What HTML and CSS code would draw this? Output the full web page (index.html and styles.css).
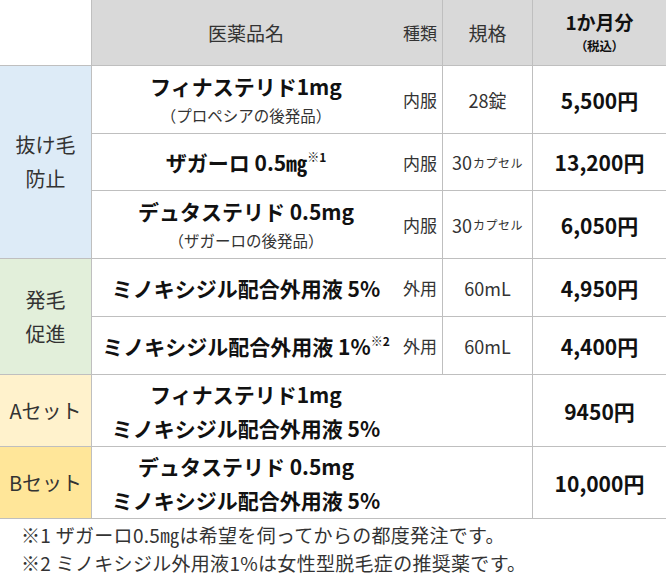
FILE: index.html
```html
<!DOCTYPE html>
<html lang="ja">
<head>
<meta charset="utf-8">
<title>料金表</title>
<link rel="stylesheet" href="styles.css">
</head>
<body>
<div class="sheet">
  <div class="cell blank"></div>
  <div class="cell head name-h noright">医薬品名</div>
  <div class="cell head type">種類</div>
  <div class="cell head spec-h">規格</div>
  <div class="cell head price-h noright">
    <span class="price-title">1か月分</span>
    <span class="price-sub">（税込）</span>
  </div>

  <div class="cell cat blue span3">抜け毛<br>防止</div>
  <div class="cell name noright">
    <span class="drug">フィナステリド1mg</span>
    <span class="note">（プロペシアの後発品）</span>
  </div>
  <div class="cell type">内服</div>
  <div class="cell spec">28錠</div>
  <div class="cell price noright">5,500円</div>

  <div class="cell name noright">
    <span class="drug">ザガーロ 0.5㎎<sup class="mark">※1</sup></span>
  </div>
  <div class="cell type">内服</div>
  <div class="cell spec">30<span class="unit">カプセル</span></div>
  <div class="cell price noright">13,200円</div>

  <div class="cell name noright">
    <span class="drug">デュタステリド 0.5mg</span>
    <span class="note">（ザガーロの後発品）</span>
  </div>
  <div class="cell type">内服</div>
  <div class="cell spec">30<span class="unit">カプセル</span></div>
  <div class="cell price noright">6,050円</div>

  <div class="cell cat green span2">発毛<br>促進</div>
  <div class="cell name noright">
    <span class="drug">ミノキシジル配合外用液 5%</span>
  </div>
  <div class="cell type">外用</div>
  <div class="cell spec">60mL</div>
  <div class="cell price noright">4,950円</div>

  <div class="cell name noright">
    <span class="drug">ミノキシジル配合外用液 1%<sup class="mark">※2</sup></span>
  </div>
  <div class="cell type">外用</div>
  <div class="cell spec">60mL</div>
  <div class="cell price noright">4,400円</div>

  <div class="cell cat set-a">Aセット</div>
  <div class="cell name set-name">
    <span class="drug set-line">フィナステリド1mg</span>
    <span class="drug set-line">ミノキシジル配合外用液 5%</span>
  </div>
  <div class="cell price noright">9450円</div>

  <div class="cell cat set-b">Bセット</div>
  <div class="cell name set-name">
    <span class="drug set-line">デュタステリド 0.5mg</span>
    <span class="drug set-line">ミノキシジル配合外用液 5%</span>
  </div>
  <div class="cell price noright">10,000円</div>
</div>

<div class="footnotes">
  <p class="fn">※1 ザガーロ0.5㎎は希望を伺ってからの都度発注です。</p>
  <p class="fn">※2 ミノキシジル外用液1%は女性型脱毛症の推奨薬です。</p>
</div>
</body>
</html>
```

FILE: styles.css
```css
html, body {
  margin: 0;
  padding: 0;
  background: #ffffff;
}

body {
  font-family: "Noto Sans CJK JP", "Noto Sans", sans-serif;
  color: #333333;
}

.sheet {
  display: grid;
  grid-template-columns: 92px 308px 43px 90px 133px;
  grid-template-rows: 66px 68px 57px 68px 58px 58px 72px 72px;
  width: 666px;
}

.cell {
  box-sizing: border-box;
  border-right: 1px solid #bfbfbf;
  border-bottom: 1px solid #bfbfbf;
  display: flex;
  align-items: center;
  justify-content: center;
  min-width: 0;
}

.noright {
  border-right: none;
}

.blank {
  background: #ffffff;
}

.head {
  background: #d9d9d9;
  font-size: 19px;
  color: #333333;
}

.head.type {
  font-size: 17px;
}

.price-h {
  flex-direction: column;
  color: #111111;
  font-weight: 700;
}

.price-title {
  font-size: 19px;
  line-height: 26px;
}

.price-sub {
  font-size: 12.5px;
  line-height: 22px;
  font-feature-settings: "palt" 1;
}

.cat {
  font-size: 20px;
  line-height: 34px;
  text-align: center;
  color: #333333;
}

.span3 {
  grid-row: span 3;
}

.span2 {
  grid-row: span 2;
}

.blue {
  background: #ddebf7;
}

.green {
  background: #e2efda;
}

.set-a {
  background: #fff2cc;
}

.set-b {
  background: #ffe699;
}

.name {
  flex-direction: column;
  text-align: center;
}

.drug {
  font-size: 21px;
  font-weight: 700;
  line-height: 30px;
  color: #111111;
  white-space: nowrap;
}

.note {
  font-size: 15.5px;
  line-height: 28px;
  color: #333333;
}

.mark {
  font-size: 12px;
  line-height: 0;
  vertical-align: 9px;
  font-weight: 700;
}

.set-name {
  grid-column: span 3;
  padding-right: 132px;
}

.set-line {
  line-height: 34px;
}

.type {
  justify-content: flex-end;
  padding-right: 5px;
  font-size: 17px;
  color: #333333;
}

.spec,
.spec-h {
  font-size: 18px;
  color: #333333;
}

.spec-h {
  font-size: 19px;
}

.unit {
  font-size: 12px;
  margin-left: 1px;
  letter-spacing: 0.5px;
}

.price {
  font-size: 21px;
  font-weight: 700;
  color: #111111;
}

.footnotes {
  padding: 2px 0 0 21px;
}

.fn {
  margin: 0;
  font-size: 19px;
  line-height: 28px;
  letter-spacing: 0.3px;
  color: #333333;
  white-space: nowrap;
}
```
